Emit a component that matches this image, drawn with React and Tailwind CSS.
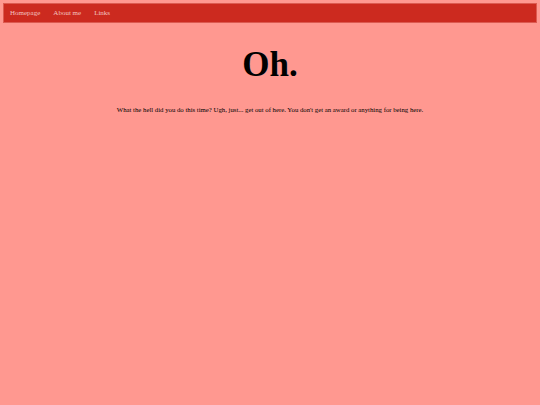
export default function App() {
  return (
    <div className="min-h-[405px] bg-[#ff9890] pt-[3px] px-[3px]" style={{ fontFamily: '"Liberation Serif", "Times New Roman", serif' }}>
      <nav className="h-[20px] bg-[#cc2a1f] border border-[#dc5a50] flex items-center pl-[6px] gap-[13px] text-[7px] text-[#f3c4c0]">
        <span>Homepage</span>
        <span>About me</span>
        <span>Links</span>
      </nav>
      <h1 className="text-center font-bold text-[35px] leading-none mt-[24px] text-black">Oh.</h1>
      <p className="text-center text-[6.75px] mt-[23px] text-black">
        What the hell did you do this time? Ugh, just... get out of here. You don't get an award or anything for being here.
      </p>
    </div>
  );
}
